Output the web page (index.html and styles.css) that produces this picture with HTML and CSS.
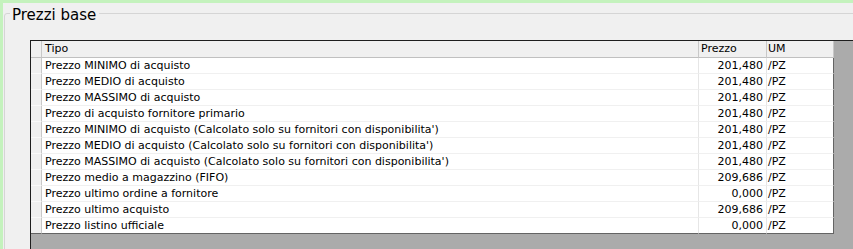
FILE: index.html
```html
<!DOCTYPE html>
<html lang="it">
<head>
<meta charset="utf-8">
<title>Prezzi base</title>
<link rel="stylesheet" href="styles.css">
</head>
<body>
<div class="panel">
  <fieldset class="group">
    <legend class="group-title">Prezzi base</legend>
    <div class="grid">
      <div class="rows">
        <div class="row head">
          <div class="ind"></div>
          <div class="c tipo">Tipo</div>
          <div class="c prezzo">Prezzo</div>
          <div class="c um">UM</div>
        </div>
        <div class="row"><div class="ind"></div><div class="c tipo">Prezzo MINIMO di acquisto</div><div class="c prezzo">201,480</div><div class="c um">/PZ</div></div>
        <div class="row"><div class="ind"></div><div class="c tipo">Prezzo MEDIO di acquisto</div><div class="c prezzo">201,480</div><div class="c um">/PZ</div></div>
        <div class="row"><div class="ind"></div><div class="c tipo">Prezzo MASSIMO di acquisto</div><div class="c prezzo">201,480</div><div class="c um">/PZ</div></div>
        <div class="row"><div class="ind"></div><div class="c tipo">Prezzo di acquisto fornitore primario</div><div class="c prezzo">201,480</div><div class="c um">/PZ</div></div>
        <div class="row"><div class="ind"></div><div class="c tipo">Prezzo MINIMO di acquisto (Calcolato solo su fornitori con disponibilita')</div><div class="c prezzo">201,480</div><div class="c um">/PZ</div></div>
        <div class="row"><div class="ind"></div><div class="c tipo">Prezzo MEDIO di acquisto (Calcolato solo su fornitori con disponibilita')</div><div class="c prezzo">201,480</div><div class="c um">/PZ</div></div>
        <div class="row"><div class="ind"></div><div class="c tipo">Prezzo MASSIMO di acquisto (Calcolato solo su fornitori con disponibilita')</div><div class="c prezzo">201,480</div><div class="c um">/PZ</div></div>
        <div class="row"><div class="ind"></div><div class="c tipo">Prezzo medio a magazzino (FIFO)</div><div class="c prezzo">209,686</div><div class="c um">/PZ</div></div>
        <div class="row"><div class="ind"></div><div class="c tipo">Prezzo ultimo ordine a fornitore</div><div class="c prezzo">0,000</div><div class="c um">/PZ</div></div>
        <div class="row"><div class="ind"></div><div class="c tipo">Prezzo ultimo acquisto</div><div class="c prezzo">209,686</div><div class="c um">/PZ</div></div>
        <div class="row last"><div class="ind"></div><div class="c tipo">Prezzo listino ufficiale</div><div class="c prezzo">0,000</div><div class="c um">/PZ</div></div>
      </div>
    </div>
  </fieldset>
</div>
</body>
</html>
```

FILE: styles.css
```css
html, body {
  margin: 0;
  padding: 0;
  overflow: hidden;
  width: 853px;
  height: 249px;
}
body {
  background: #c4f2bd;
  font-family: "DejaVu Sans", Tahoma, sans-serif;
  font-size: 11px;
  color: #000;
}
.panel {
  margin: 3px 0 0 3px;
  width: 850px;
  height: 246px;
  overflow: hidden;
  background: #f0f0f0;
  box-sizing: border-box;
  padding: 0 0 0 1px;
}
.group {
  margin: 0 -40px 0 0;
  padding: 0 0 0 5px;
  border: 1px solid #d5d5d5;
  border-radius: 3px;
  height: 300px;
  box-sizing: border-box;
  min-width: 0;
}
.group-title {
  font-size: 15px;
  line-height: 16px;
  padding: 4px 3px 0 2px;
  color: #000;
}
.grid {
  margin: 17px 0 0 20px;
  width: 860px;
  height: 240px;
  background: #ababab;
  border-top: 1px solid #1e1e1e;
  border-left: 1px solid #1e1e1e;
}
.rows {
  width: 803px;
}
.row {
  display: grid;
  grid-template-columns: 11px 657px 68px 67px;
  height: 16px;
  background: #fff;
}
.row > div {
  box-sizing: border-box;
  border-right: 1px solid #e6e6e6;
  border-bottom: 1px solid #f0f0f0;
  line-height: 15px;
  white-space: nowrap;
  overflow: hidden;
}
.row > .ind {
  background: #f0f0f0;
  border-right: 1px solid #c8c8c8;
  border-bottom: 1px solid #fafafa;
}
.row > .um {
  border-right: 1px solid #646464;
}
.row.head {
  height: 17px;
  background: #f0f0f0;
}
.row.head > div {
  border-right: 1px solid #c8c8c8;
  border-bottom: 1px solid #c0c0c0;
  line-height: 16px;
}
.row.last > div {
  border-bottom: 1px solid #646464;
}
.tipo { padding-left: 3px; }
.prezzo { padding-right: 3px; text-align: right; }
.head .prezzo { text-align: left; padding-left: 2px; }
.um { padding-left: 1px; }
```
